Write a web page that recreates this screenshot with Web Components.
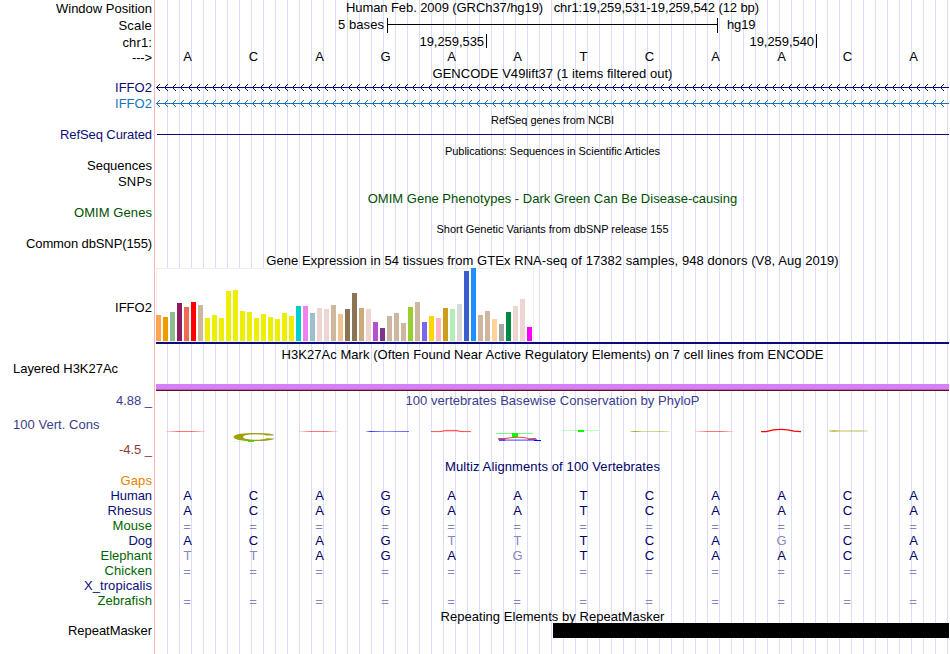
<!DOCTYPE html>
<html lang="en">
<head>
<meta charset="utf-8">
<title>chr1:19,259,531-19,259,542</title>
<style>
  html,body{margin:0;background:#fff}
  body{font:13px "Liberation Sans",Arial,sans-serif;color:#000;width:950px;height:654px;overflow:hidden}
</style>
</head>
<body>
<genome-browser></genome-browser>
<script>
const NAVY = "#0c0c78";

// one line of text, tracked out or in to a given width
class TrackText extends HTMLElement {
  constructor() {
    super();
    this.attachShadow({ mode: "open" });
    this.shadowRoot.innerHTML = `
      <style>
        :host{display:block;flex:none}
        span{display:block;width:max-content;white-space:pre}
      </style>
      <span><slot></slot></span>`;
  }
  connectedCallback() {
    const w = parseFloat(this.getAttribute("w"));
    if (!w) return;
    const span = this.shadowRoot.querySelector("span");
    const gap = (w - span.getBoundingClientRect().width) / this.textContent.length;
    span.style.letterSpacing = gap.toFixed(3) + "px";
  }
}
customElements.define("track-text", TrackText);

// label column on the left, track drawing on the right
class TrackRow extends HTMLElement {
  constructor() {
    super();
    this.attachShadow({ mode: "open" });
    this.shadowRoot.innerHTML = `
      <style>
        :host{display:flex;flex:none;height:var(--h);line-height:var(--h)}
        .label{width:152px;flex:none;display:flex;justify-content:flex-end;height:100%}
        .track{width:795px;margin-left:2px;flex:none;height:100%}
      </style>
      <div class="label"><slot name="label"></slot></div>
      <div class="track"><slot></slot></div>`;
  }
  connectedCallback() {
    this.style.setProperty("--h", this.getAttribute("h") + "px");
  }
}
customElements.define("track-row", TrackRow);

class TrackTitle extends HTMLElement {
  constructor() {
    super();
    this.attachShadow({ mode: "open" });
    this.shadowRoot.innerHTML = `
      <style>
        :host{display:flex;justify-content:center;padding:1px 0 0 2px}
        :host([small]){font-size:11px}
      </style>
      <slot></slot>`;
  }
}
customElements.define("track-title", TrackTitle);

class ScaleBar extends HTMLElement {
  constructor() {
    super();
    this.attachShadow({ mode: "open" });
    this.shadowRoot.innerHTML = `
      <style>
        :host{display:flex;height:17px;line-height:17px}
        .left{width:230px;display:flex;justify-content:flex-end;margin-right:3px}
        .bar{width:329px;height:15px;margin-top:2px;border:solid #000;border-width:0 1px;display:flex;align-items:center}
        .bar i{display:block;width:100%;height:1px;background:#000;margin-bottom:2px}
        .right{margin-left:9px}
      </style>
      <div class="left"><track-text w="46">5 bases</track-text></div>
      <div class="bar"><i></i></div>
      <div class="right"><track-text w="28.5">hg19</track-text></div>`;
  }
}
customElements.define("scale-bar", ScaleBar);

class PositionRuler extends HTMLElement {
  constructor() {
    super();
    this.attachShadow({ mode: "open" });
    this.shadowRoot.innerHTML = `
      <style>
        :host{display:flex;height:17px;line-height:17px}
        div{width:327px;height:14px;margin-top:1px;border-right:1px solid #000;display:flex;justify-content:flex-end;padding-right:2px}
        div:first-child{width:330px}
        track-text{margin-top:-1px}
      </style>
      <div><track-text w="64.5">19,259,535</track-text></div>
      <div><track-text w="64.5">19,259,540</track-text></div>`;
  }
}
customElements.define("position-ruler", PositionRuler);

// twelve bases; lower-case letters are mismatches and drawn faded
class BaseRow extends HTMLElement {
  constructor() {
    super();
    this.attachShadow({ mode: "open" });
  }
  connectedCallback() {
    const cells = [...this.getAttribute("seq")]
      .map((c) => `<span class="${c === "=" ? "gap" : /[a-z]/.test(c) ? "dim" : ""}">${c.toUpperCase()}</span>`)
      .join("");
    this.shadowRoot.innerHTML = `
      <style>
        :host{display:grid;grid-template-columns:repeat(12,66px);text-align:center}
        span{padding-left:1px}
        .dim,.gap{color:#8686bc}
        .gap{padding:1px 0 0}
      </style>${cells}`;
  }
}
customElements.define("base-row", BaseRow);

class GeneLine extends HTMLElement {
  constructor() {
    super();
    this.attachShadow({ mode: "open" });
  }
  connectedCallback() {
    const plain = this.hasAttribute("plain");
    let d = "";
    for (let x = 2; !plain && x < 795; x += 8) {
      for (let i = 1; i <= 3; i++) d += `M${x + i} ${7 - i}h1v1h-1zM${x + i} ${7 + i}h1v1h-1z`;
    }
    this.shadowRoot.innerHTML = `
      <style>
        :host{display:block;height:16px}
        svg{display:block}
      </style>
      <svg width="795" height="16" fill="currentColor" shape-rendering="crispEdges">
        <rect x="${plain ? 3 : 2}" y="7" width="793" height="1"/><path d="${d}"/>
      </svg>`;
  }
}
customElements.define("gene-line", GeneLine);

const TISSUES = [
  [26,"#ffa54f"],[24,"#ee9a00"],[29,"#8fbc8f"],[38,"#8b1c62"],[34,"#ee6a50"],[39,"#ff0000"],[36,"#cdb79e"],
  ...[23,26,23,50,51,30,29,23,27,24,22,28,25].map((h) => [h, "#eeee00"]),
  [35,"#00cdcd"],[35,"#ee82ee"],[28,"#9ac0cd"],[33,"#eed5d2"],[32,"#eed5d2"],[36,"#cdb79e"],[27,"#eec591"],
  [32,"#8b7355"],[48,"#8b7355"],[33,"#cdaa7d"],[32,"#eed5d2"],[19,"#b452cd"],[13,"#7a378b"],[25,"#cdb79e"],
  [28,"#cdb79e"],[18,"#cdb79e"],[34,"#9acd32"],[39,"#cdb79e"],[19,"#7a67ee"],[25,"#ffd700"],[23,"#ffb6c1"],
  [33,"#cd9b1d"],[32,"#b4eeb4"],[37,"#d9d9d9"],[70,"#3a5fcd"],[73,"#1e90ff"],[26,"#cdb79e"],[30,"#cdb79e"],
  [22,"#ffd39b"],[17,"#a6a6a6"],[29,"#008b45"],[35,"#eed5d2"],[42,"#eed5d2"],[14,"#ff00ff"],
];

class ExpressionChart extends HTMLElement {
  constructor() {
    super();
    this.attachShadow({ mode: "open" });
    this.shadowRoot.innerHTML = `
      <style>
        :host{display:block;margin-left:2px}
        .bars{display:flex;align-items:flex-end;gap:2px;width:378px;height:74px;box-sizing:border-box;padding-bottom:1px;background:#fff;box-shadow:inset 0 0 0 1px #eee}
        .bars i{width:5px;flex:none}
        .model{height:2px;background:#0c0c78}
      </style>
      <div class="bars">${TISSUES.map(([h, c]) => `<i style="height:${h}px;background:${c}"></i>`).join("")}</div>
      <div class="model"></div>`;
  }
}
customElements.define("expression-chart", ExpressionChart);

class HistoneSignal extends HTMLElement {
  constructor() {
    super();
    this.attachShadow({ mode: "open" });
    this.shadowRoot.innerHTML = `
      <style>
        :host{display:flex;flex-direction:column;justify-content:flex-end;height:100%;padding-left:2px}
        div{height:5px;background:#d580ff;border-bottom:1px solid #c06090}
        i{height:1px;background:#5c1030}
      </style>
      <div></div><i></i>`;
  }
}
customElements.define("histone-signal", HistoneSignal);

// base letters squashed to their score, one per column
class ConservationLogo extends HTMLElement {
  constructor() {
    super();
    this.attachShadow({ mode: "open" });
    this.shadowRoot.innerHTML = `
      <style>
        :host{display:block}
        svg{display:block}
        text{font:bold 10px "Liberation Sans",Arial,sans-serif}
      </style>
      <svg width="795" height="50" viewBox="154 409 795 50">
        <defs>
          <linearGradient id="a"><stop offset="0" stop-color="#f00" stop-opacity=".1"/><stop offset=".3" stop-color="#f00" stop-opacity=".55"/><stop offset=".7" stop-color="#f00" stop-opacity=".55"/><stop offset="1" stop-color="#f00" stop-opacity=".1"/></linearGradient>
          <linearGradient id="c"><stop offset="0" stop-color="#a0a000" stop-opacity=".3"/><stop offset=".12" stop-color="#a0a000" stop-opacity=".9"/><stop offset=".3" stop-color="#a0a000" stop-opacity=".4"/><stop offset=".8" stop-color="#a0a000" stop-opacity=".5"/><stop offset="1" stop-color="#a0a000" stop-opacity=".2"/></linearGradient>
          <linearGradient id="g"><stop offset="0" stop-color="#00f" stop-opacity=".2"/><stop offset=".1" stop-color="#00f" stop-opacity=".8"/><stop offset=".4" stop-color="#00f" stop-opacity=".4"/><stop offset="1" stop-color="#00f" stop-opacity=".6"/></linearGradient>
        </defs>
        <rect x="166" y="431" width="39" height="1" fill="url(#a)"/>
        <text transform="translate(231.2 440.8) scale(6.3 1.08)" fill="#a0a000">C</text>
        <rect x="248" y="441" width="6" height="1" fill="#0f0"/>
        <rect x="233" y="441" width="15" height="1" fill="#0f0" opacity=".12"/>
        <rect x="299" y="431" width="39" height="1" fill="url(#a)"/>
        <rect x="366" y="431" width="43" height="1" fill="url(#g)"/>
        <path d="M431 431.6h9l6-1.2h10l6 1.2h9" fill="none" stroke="#f00" stroke-opacity=".7"/>
        <path d="M440 431.5h22" stroke="#f00" stroke-opacity=".2"/>
        <rect x="496" y="433" width="37" height="1" fill="#0f0" opacity=".5"/>
        <rect x="512" y="433" width="6" height="4" fill="#0f0"/>
        <path d="M498 438.6h7q12-2.6 23-.4l8 .4" fill="none" stroke="#f00" stroke-opacity=".75" stroke-width="1.1"/>
        <rect x="498" y="439" width="36" height="1" fill="#00f" opacity=".3"/>
        <rect x="499" y="440" width="35" height="1" fill="#00f" opacity=".45"/>
        <rect x="499" y="439" width="6" height="2" fill="#00f" opacity=".45"/>
        <rect x="534" y="440" width="7" height="1" fill="#00f"/>
        <rect x="528" y="439" width="9" height="1" fill="#00f" opacity=".5"/>
        <rect x="562" y="430" width="37" height="1" fill="#0f0" opacity=".25"/>
        <rect x="578" y="430" width="6" height="2" fill="#0f0"/>
        <rect x="630" y="431" width="40" height="1" fill="url(#c)"/>
        <rect x="695" y="431" width="39" height="1" fill="url(#a)"/>
        <path d="M761 431.6h5q14-4 28-.5l7 .5" fill="none" stroke="#f00" stroke-width="1.3"/>
        <rect x="829" y="430" width="39" height="2" fill="url(#c)" opacity=".75"/>
      </svg>`;
  }
}
customElements.define("conservation-logo", ConservationLogo);

class GenomeBrowser extends HTMLElement {
  constructor() {
    super();
    this.attachShadow({ mode: "open" });
  }
  connectedCallback() {
    const label = (text, w, style = "") => `<track-text slot="label" w="${w}" style="${style}">${text}</track-text>`;
    const title = (h, text, w, style = "", attrs = "") =>
      `<track-row h="${h}"><track-title ${attrs} style="${style}"><track-text w="${w}">${text}</track-text></track-title></track-row>`;
    const species = [
      ["Human", 41.5, NAVY, "ACAGAATCAACA"],
      ["Rhesus", 44.5, NAVY, "ACAGAATCAACA"],
      ["Mouse", 39.5, "#006400", "============"],
      ["Dog", 23.5, NAVY, "ACAGttTCAgCA"],
      ["Elephant", 51.5, "#006400", "ttAGAgTCAACA"],
      ["Chicken", 47.5, "#006400", "============"],
      ["X_tropicalis", 68, NAVY, ""],
      ["Zebrafish", 54.5, "#006400", "============"],
    ];
    this.shadowRoot.innerHTML = `
      <style>
        :host{
          display:flex;flex-direction:column;width:949px;height:654px;
          background:
            linear-gradient(#ffb4b4,#ffb4b4) 154px 0/1px 100% no-repeat,
            repeating-linear-gradient(90deg,#dcdcff 0 1px,transparent 1px 12px) 167px 0/782px 100% no-repeat;
        }
        .left{width:139px}
        .cons{display:flex;flex-direction:column;align-items:flex-end;line-height:16px}
        .repeat{height:15px;margin-left:399px;width:396px;background:#000}
      </style>
      <track-row h="16">${label("Window Position", 96, "padding-top:1px")}
        <track-title style="padding-top:0"><track-text w="413">Human Feb. 2009 (GRCh37/hg19)   chr1:19,259,531-19,259,542 (12 bp)</track-text></track-title></track-row>
      <track-row h="17">${label("Scale", 33.5, "padding-top:1px")}<scale-bar></scale-bar></track-row>
      <track-row h="17">${label("chr1:", 29.5, "padding-top:1px")}<position-ruler style="padding-left:3px"></position-ruler></track-row>
      <track-row h="16">${label("---&gt;", 20)}<base-row seq="ACAGAATCAACA" style="margin-top:-1px"></base-row></track-row>
      ${title(14, "GENCODE V49lift37 (1 items filtered out)", 240)}
      <track-row h="16" style="color:${NAVY}">${label("IFFO2", 37)}<gene-line></gene-line></track-row>
      <track-row h="16" style="color:#1a74b8">${label("IFFO2", 37)}<gene-line></gene-line></track-row>
      ${title(15, "RefSeq genes from NCBI", 123, "", "small")}
      <track-row h="16" style="color:${NAVY}">${label("RefSeq Curated", 92)}<gene-line plain></gene-line></track-row>
      ${title(15, "Publications: Sequences in Scientific Articles", 215, "", "small")}
      <track-row h="16">${label("Sequences", 65)}</track-row>
      <track-row h="16">${label("SNPs", 34)}</track-row>
      ${title(16, "OMIM Gene Phenotypes - Dark Green Can Be Disease-causing", 369.5, "color:#005000")}
      <track-row h="14" style="color:#005000">${label("OMIM Genes", 78)}</track-row>
      ${title(17, "Short Genetic Variants from dbSNP release 155", 232, "", "small")}
      <track-row h="14">${label("Common dbSNP(155)", 126)}</track-row>
      ${title(17, "Gene Expression in 54 tissues from GTEx RNA-seq of 17382 samples, 948 donors (V8, Aug 2019)", 572.5)}
      <track-row h="77">${label("IFFO2", 37, "padding-top:1px")}<expression-chart></expression-chart></track-row>
      ${title(18, "H3K27Ac Mark (Often Found Near Active Regulatory Elements) on 7 cell lines from ENCODE", 542)}
      <track-row h="28">
        <div slot="label" class="left" style="line-height:12px"><track-text w="105">Layered H3K27Ac</track-text></div>
        <histone-signal></histone-signal>
      </track-row>
      <track-row h="68" style="color:#3c3c8c">
        <div slot="label" class="left cons">
          <track-text w="36" style="padding-top:2px">4.88 _</track-text>
          <track-text w="86.5" style="align-self:flex-start;padding-top:8px">100 Vert. Cons</track-text>
          <track-text w="33" style="color:#8c3c3c;padding-top:9px">-4.5 _</track-text>
        </div>
        <track-title style="line-height:18px;height:17px"><track-text w="294">100 vertebrates Basewise Conservation by PhyloP</track-text></track-title>
        <conservation-logo></conservation-logo>
      </track-row>
      ${title(14, "Multiz Alignments of 100 Vertebrates", 215, "color:#000064")}
      <track-row h="15" style="color:#e68200">${label("Gaps", 31.5)}</track-row>
      ${species
        .map(([name, w, color, seq]) => `<track-row h="15">${label(name, w, `color:${color}`)}<base-row seq="${seq}" style="color:#000064"></base-row></track-row>`)
        .join("")}
      ${title(15, "Repeating Elements by RepeatMasker", 224)}
      <track-row h="15">${label("RepeatMasker", 84)}<div class="repeat"></div></track-row>
    `;
  }
}
customElements.define("genome-browser", GenomeBrowser);
</script>
</body>
</html>
